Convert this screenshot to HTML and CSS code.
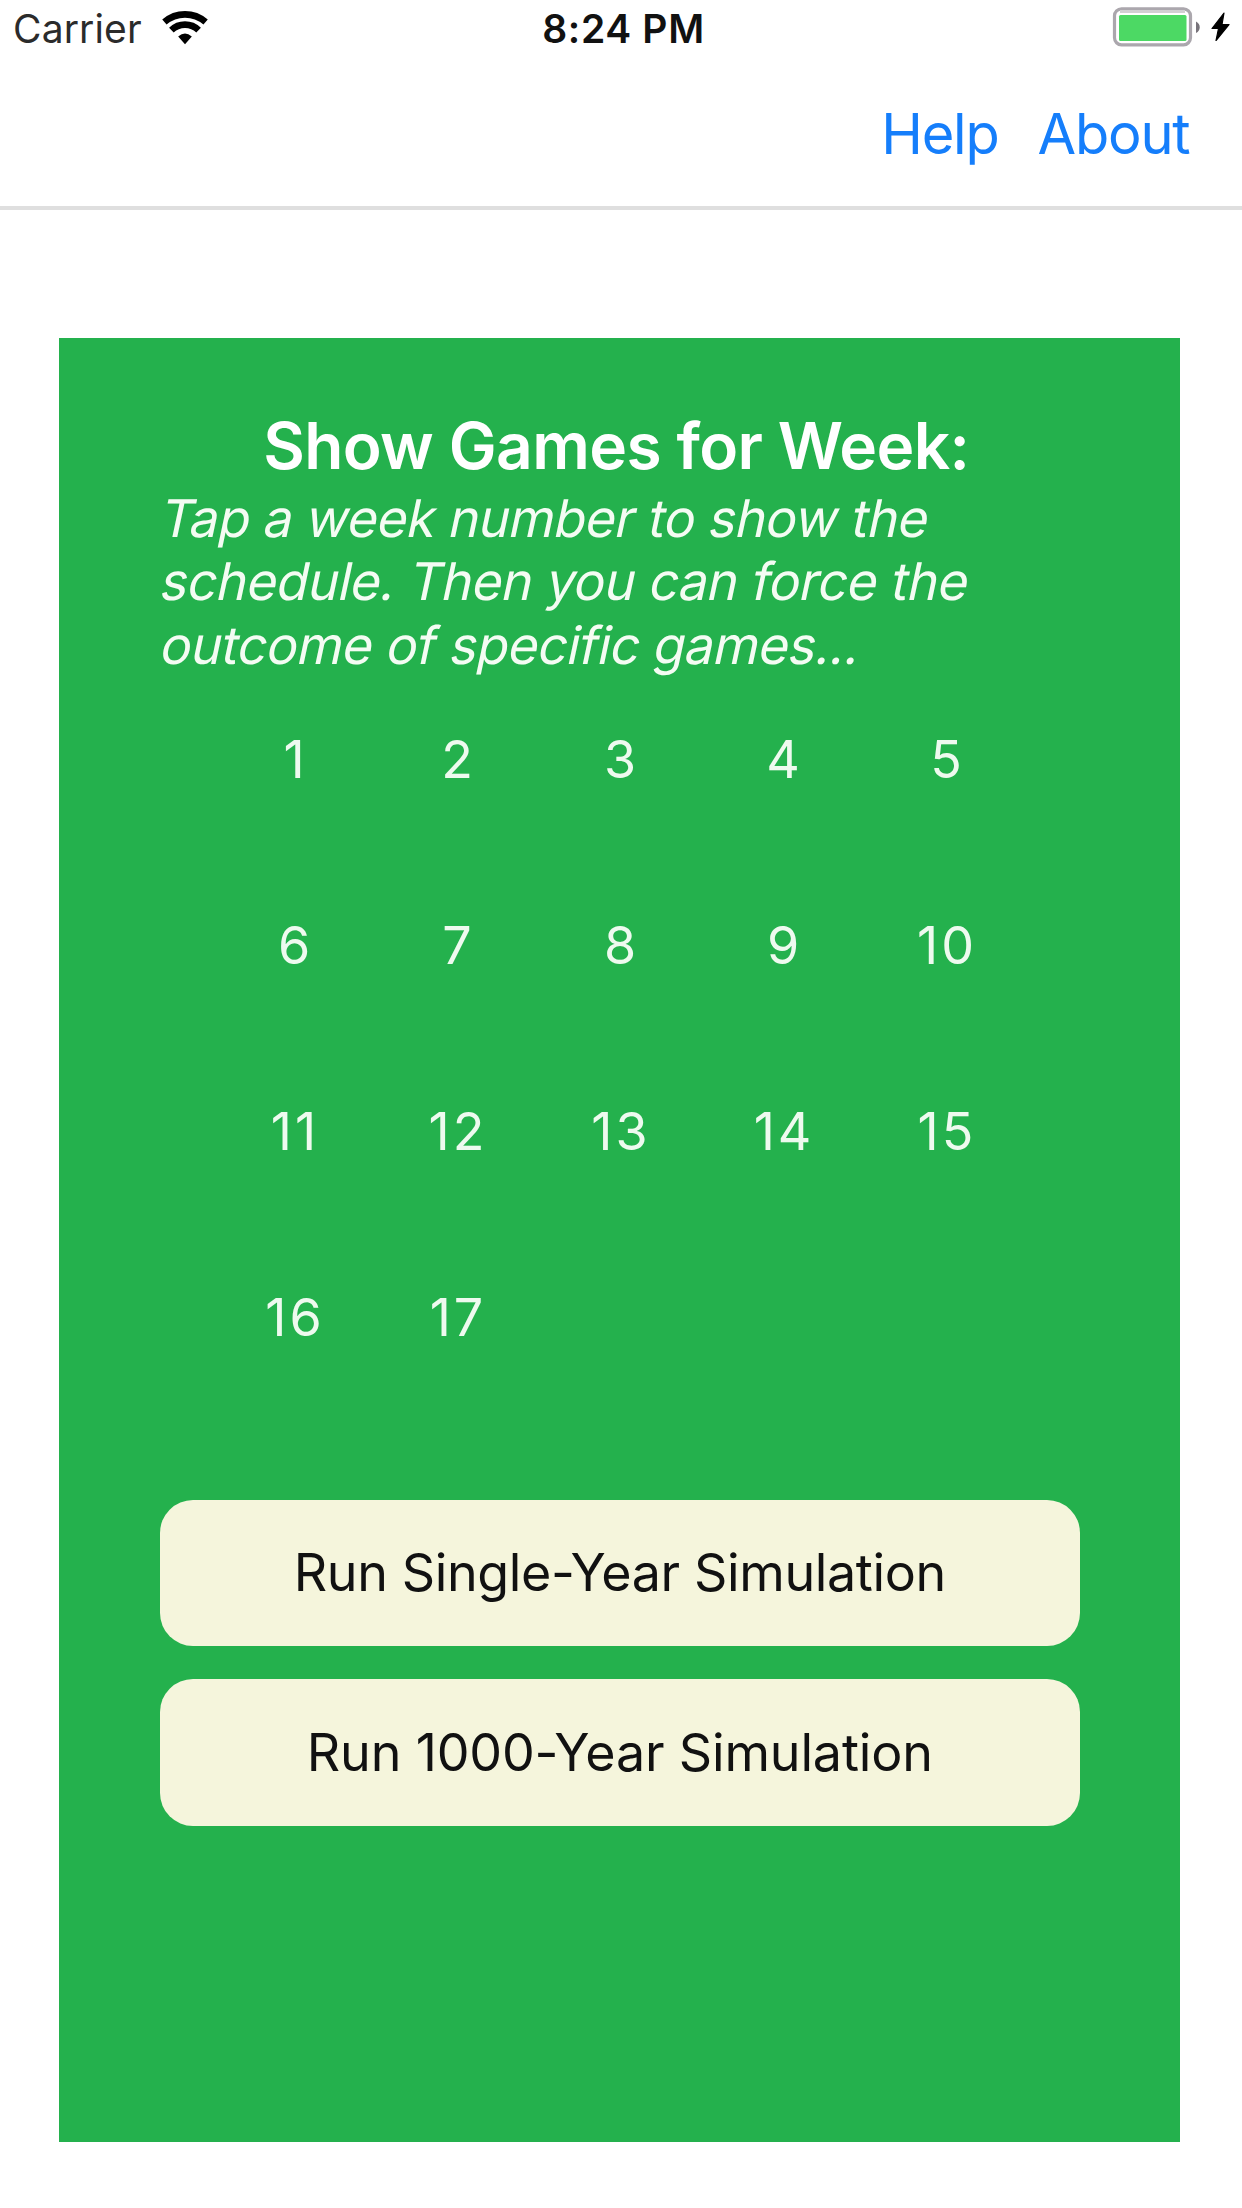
FILE: index.html
```html
<!DOCTYPE html>
<html lang="en">
<head>
  <meta charset="utf-8">
  <title>Show Games for Week</title>
  <link rel="stylesheet" href="styles.css">
</head>
<body>
  <div class="status-bar">
    <div class="status-left">
      <span class="carrier">Carrier</span>
      <svg class="wifi" width="46" height="36" viewBox="0 0 46 36" aria-hidden="true">
        <g fill="none" stroke="#000" stroke-width="6.6">
          <path d="M2.4 13A31.5 31.5 0 0 1 43.6 13"/>
          <path d="M9.4 21.2A19.5 19.5 0 0 1 36.6 21.2"/>
        </g>
        <path d="M16.2 27.6Q23 21.4 29.8 27.6L23 35.2Z"/>
      </svg>
    </div>
    <time class="clock">8:24 PM</time>
    <div class="status-right">
      <svg class="battery" width="88" height="42" viewBox="0 0 88 42" aria-hidden="true">
        <rect x="2.5" y="2.8" width="76" height="36" rx="7" fill="#fff" stroke="#aba7ad" stroke-width="3.2"/>
        <path d="M8 5.5H73" stroke="#d2d0d3" stroke-width="3"/>
        <rect x="7" y="9" width="67.5" height="26" rx="1.5" fill="#4cd964"/>
        <path d="M84 15.5c2.6 1.4 3.7 3.2 3.7 5.8s-1.1 4.4-3.7 5.8z" fill="#77737a"/>
      </svg>
      <svg class="bolt" width="19" height="30" viewBox="0 0 19 30" aria-hidden="true">
        <path d="M13 1L1 16.5H7.5L5 28.5L18 12.5H11Z" stroke="#000" stroke-width="1.2" stroke-linejoin="round"/>
      </svg>
    </div>
  </div>

  <nav class="nav-bar">
    <a class="nav-link">Help</a>
    <a class="nav-link">About</a>
  </nav>

  <main class="card">
    <h1 class="title">Show Games for Week:</h1>
    <p class="hint">
      <span class="hint-line first">Tap a week number to show the</span>
      <span class="hint-line">schedule. Then you can force the</span>
      <span class="hint-line">outcome of specific games...</span>
    </p>
    <div class="weeks">
      <span>1</span><span>2</span><span>3</span><span>4</span><span>5</span>
      <span>6</span><span>7</span><span>8</span><span>9</span><span class="pair">10</span>
      <span class="pair">11</span><span class="pair">12</span><span class="pair">13</span><span class="pair">14</span><span class="pair">15</span>
      <span class="pair">16</span><span class="pair">17</span>
    </div>
    <div class="actions">
      <button class="action single">Run Single-Year Simulation</button>
      <button class="action">Run 1000-Year Simulation</button>
    </div>
  </main>
</body>
</html>
```
FILE: styles.css
```css
* {
  box-sizing: border-box;
}

body {
  margin: 0;
  background: #fff;
  color: #000;
  font-family: Inter, "Liberation Sans", sans-serif;
}

.status-bar {
  display: grid;
  grid-template-columns: 1fr auto 1fr;
  height: 58px;
  padding: 0 12px 0 13px;
  font-size: 39px;
  line-height: 58px;
}

.status-left,
.status-right {
  display: flex;
  align-items: flex-start;
}

.status-left {
  gap: 20px;
}

.carrier {
  color: #2b2b2b;
  letter-spacing: 0.14px;
}

.wifi {
  margin-top: 9px;
}

.clock {
  padding-left: 4px;
  color: #111;
  font-weight: 600;
  letter-spacing: 0.66px;
}

.status-right {
  justify-content: flex-end;
  gap: 11px;
}

.battery {
  margin-top: 6px;
}

.bolt {
  margin-top: 12px;
}

.nav-bar {
  display: flex;
  align-items: center;
  justify-content: flex-end;
  gap: 39px;
  height: 152px;
  padding: 4px 52.5px 0 0;
  border-bottom: 4px solid #dfdfdf;
}

.nav-link {
  color: #157efb;
  font-size: 56px;
  letter-spacing: -1.2px;
}

.card {
  width: 1121px;
  height: 1804px;
  margin: 128px 0 0 59px;
  padding: 70px 100.5px 0 101px;
  background: #24b14d;
  color: #fff;
}

.title {
  margin: 0;
  padding-right: 7px;
  font-size: 64px;
  font-weight: 600;
  line-height: 76px;
  letter-spacing: -0.62px;
  text-align: center;
}

.hint {
  margin: 3px 0 0 -2px;
  font-size: 52px;
  line-height: 63.3px;
  color: #f4fcf3;
}

/* Slants the upright letterforms around their baseline. */
.hint-line {
  display: block;
  letter-spacing: -0.5px;
  white-space: nowrap;
  transform: skewX(-12deg);
  transform-origin: 0 50.5px;
}

.hint-line.first {
  letter-spacing: -0.58px;
}

.weeks {
  display: grid;
  grid-template-columns: repeat(5, 163px);
  grid-auto-rows: 60px;
  row-gap: 126px;
  margin: 53px 0 0 52.5px;
  color: #eefaef;
  font-size: 52px;
  line-height: 60px;
  text-align: center;
}

.pair {
  padding-left: 2px;
  letter-spacing: 3px;
}

.actions {
  display: grid;
  gap: 33px;
  margin-top: 152px;
}

.action {
  height: 146.5px;
  padding: 0 0 1px;
  border: 0;
  border-radius: 33px;
  background: #f5f5dc;
  color: #111;
  font-family: inherit;
  font-size: 52px;
  letter-spacing: -0.17px;
}

.action.single {
  letter-spacing: -0.38px;
}
```
